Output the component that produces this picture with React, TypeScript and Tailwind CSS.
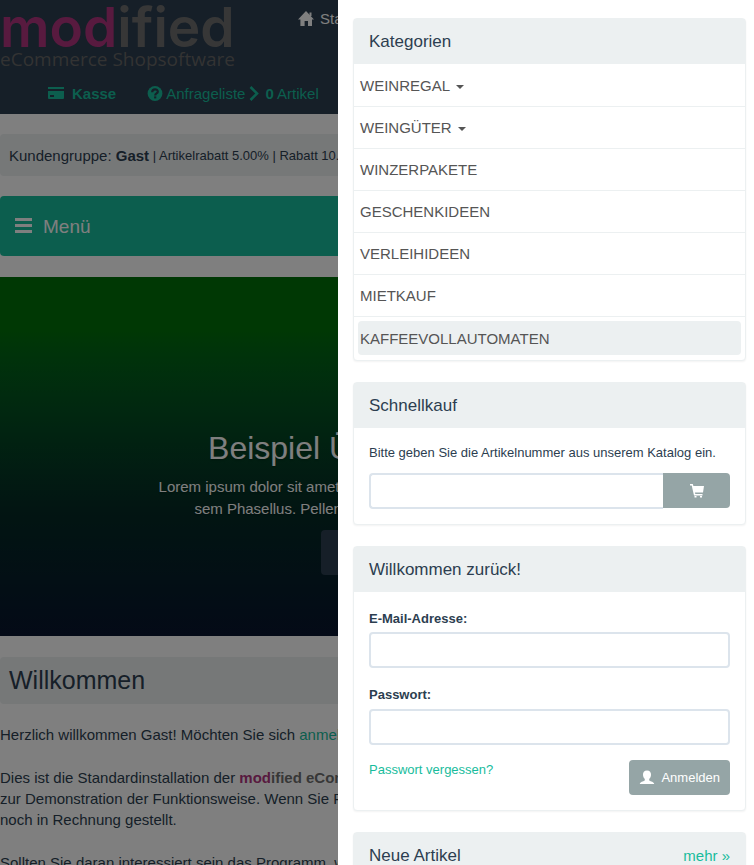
import React from "react";

const categories = [
  { name: "WEINREGAL", sub: true },
  { name: "WEINGÜTER", sub: true },
  { name: "WINZERPAKETE" },
  { name: "GESCHENKIDEEN" },
  { name: "VERLEIHIDEEN" },
  { name: "MIETKAUF" },
  { name: "KAFFEEVOLLAUTOMATEN", active: true },
];

function HomeIcon() {
  return (
    <svg className="h-4 w-4" viewBox="0 0 16 16" fill="currentColor" aria-hidden="true">
      <path d="M8 0 16 8.4H14V15H10V10H6.6V15H2.4V8.4H0Z" />
      <path d="M11.5 1.5H13.5V5H11.5Z" />
    </svg>
  );
}

function CardIcon() {
  return (
    <svg className="h-4 w-4" viewBox="0 0 16 16" fill="currentColor" aria-hidden="true">
      <path d="M0 1H16V3H0ZM0 5H16V12Q16 13 15 13H1Q0 13 0 12ZM2 9V11H6V9Z" fillRule="evenodd" />
    </svg>
  );
}

function QuestionIcon() {
  return (
    <svg className="h-4 w-4" viewBox="0 0 16 16" aria-hidden="true">
      <circle cx="8" cy="7.5" r="7.4" fill="currentColor" />
      <path d="M5.2 6.2C5.2 2.6 10.8 2.6 10.8 5.7C10.8 7.6 8.2 7.3 8.2 9.4" fill="none" stroke="#2c3e50" strokeWidth="2.2" />
      <path d="M7.1 10.4H9.3V12.4H7.1Z" fill="#2c3e50" />
    </svg>
  );
}

function ChevronIcon() {
  return (
    <svg className="h-4 w-3.5" viewBox="2 0 14 16" fill="none" stroke="currentColor" strokeWidth="2.6" aria-hidden="true">
      <path d="M4.5 1 11 7.5 4.5 14" />
    </svg>
  );
}

function CartIcon() {
  return (
    <svg className="h-4 w-4" viewBox="0 0 16 16" fill="currentColor" aria-hidden="true">
      <path d="M1 1H3.8L4.4 3H15L14 9.6H5.9L6.3 11H13.5V12.4H5L2.7 2.4H1Z" />
      <path d="M5.5 13H7.5V14.5H5.5ZM11 13H13V14.5H11Z" />
    </svg>
  );
}

function UserIcon() {
  return (
    <svg className="h-4 w-4" viewBox="0 0 16 16" fill="currentColor" aria-hidden="true">
      <path d="M8 0.5C10.8 0.5 12.2 2.4 12 5C11.9 7 11 8.2 10.2 9V10.4C11.8 11.4 15 11.8 15.2 14H0.8C1 11.8 4.2 11.4 5.8 10.4V9C5 8.2 4.1 7 4 5C3.8 2.4 5.2 0.5 8 0.5Z" />
    </svg>
  );
}

function Panel({ title, more, children }: { title: string; more?: boolean; children?: React.ReactNode }) {
  return (
    <section className="rounded border border-[#ecf0f1] bg-white shadow-xs">
      <header className="flex h-[45px] items-center justify-between bg-[#ecf0f1] px-[15px]">
        <h2 className="text-[17px] leading-6">{title}</h2>
        {more && (
          <a href="#neu" className="text-[15px] leading-5 text-[#18bc9c]">
            mehr »
          </a>
        )}
      </header>
      {children}
    </section>
  );
}

const inputStyle = "h-9 w-full rounded border-2 border-[#dce4ec] bg-white px-3 text-[15px] outline-none";

function Drawer() {
  return (
    <aside className="fixed inset-y-0 right-0 flex w-[416px] flex-col gap-[21px] overflow-hidden bg-white pt-[18px] pr-2 pl-[15px]">
      <Panel title="Kategorien">
        <ul className="divide-y divide-[#ecf0f1] py-px text-[15px] leading-[21px] text-[#555555]">
          {categories.map((c) => (
            <li key={c.name} className="p-1">
              <a
                href="#kategorie"
                className={
                  c.active
                    ? "flex h-[34px] items-center rounded bg-[#ecf0f1] px-0.5"
                    : "flex h-[33px] items-center gap-1.5 px-0.5"
                }
              >
                {c.name}
                {c.sub && (
                  <svg className="mt-0.5 h-1 w-2" viewBox="0 0 8 4" fill="currentColor" aria-hidden="true">
                    <path d="M0 0H8L4 4Z" />
                  </svg>
                )}
              </a>
            </li>
          ))}
        </ul>
      </Panel>

      <Panel title="Schnellkauf">
        <form className="p-[15px]">
          <label htmlFor="sku" className="block pb-[11px] text-[13px] leading-[19px]">
            Bitte geben Sie die Artikelnummer aus unserem Katalog ein.
          </label>
          <div className="flex">
            <input id="sku" type="text" className="h-9 min-w-0 flex-1 rounded-l border-2 border-r-0 border-[#dce4ec] px-3 text-[15px] outline-none" />
            <button type="button" aria-label="In den Warenkorb" className="flex h-[35px] w-[67px] items-center justify-center rounded-r bg-[#95a5a6] text-white">
              <CartIcon />
            </button>
          </div>
        </form>
      </Panel>

      <Panel title="Willkommen zurück!">
        <form className="px-[15px] pt-[17px] pb-[15px] text-[13px] leading-[19px]">
          <label htmlFor="email" className="block pb-1 font-bold">E-Mail-Adresse:</label>
          <input id="email" type="email" className={inputStyle} />
          <label htmlFor="password" className="block pt-[17px] pb-[5px] font-bold">Passwort:</label>
          <input id="password" type="password" className={inputStyle} />
          <div className="flex items-start justify-between pt-[15px]">
            <a href="#passwort" className="text-[#18bc9c]">Passwort vergessen?</a>
            <button type="button" className="flex h-[35px] items-center gap-1.5 rounded bg-[#95a5a6] px-2.5 text-white">
              <UserIcon />
              Anmelden
            </button>
          </div>
        </form>
      </Panel>

      <Panel title="Neue Artikel" more />
    </aside>
  );
}

export default function App() {
  return (
    <div className="h-screen overflow-hidden bg-white font-['Liberation_Sans',Arial,sans-serif] text-[15px] leading-[21px] text-[#2c3e50]">
      <header className="flex h-[114px] flex-col justify-between bg-[#2c3e50] pb-2.5">
        <div className="flex items-start">
          <div className="w-[298px] text-[#6f6f6f]">
            <div className="font-[Inter,sans-serif] text-[55px] leading-[54px] font-semibold">
              <span className="text-[#b0347e]">mod</span>ified
            </div>
            <div className="font-['Open_Sans',sans-serif] text-[19px] leading-[10px] text-[#666666]">eCommerce Shopsoftware</div>
          </div>
          <a href="#start" className="flex items-center gap-1.5 pt-2 text-white">
            <HomeIcon />
            Startseite
          </a>
        </div>
        <nav className="flex items-center gap-[31px] pl-12 text-[#18bc9c]">
          <a href="#kasse" className="flex items-center gap-2 font-bold">
            <CardIcon />
            Kasse
          </a>
          <a href="#liste" className="flex items-center gap-[3px]">
            <QuestionIcon />
            Anfrageliste
            <ChevronIcon />
            <span><b>0</b> Artikel</span>
          </a>
        </nav>
      </header>

      <div className="mt-5 flex h-[42px] items-center rounded bg-[#ecf0f1] px-[9px] whitespace-pre">
        Kundengruppe: <b>Gast</b>
        <span className="text-[13px]"> | Artikelrabatt 5.00% | Rabatt 10.00%</span>
      </div>

      <button type="button" className="mt-5 flex h-[60px] w-full items-center gap-2.5 rounded bg-[#18bc9c] px-[15px] text-[19px] text-white">
        <svg className="h-[18px] w-[18px]" viewBox="0 0 18 18" fill="currentColor" aria-hidden="true">
          <path d="M0 1H17V4H0ZM0 7H17V10H0ZM0 13H17V16H0Z" />
        </svg>
        Menü
      </button>

      <section className="mt-[21px] flex h-[359px] flex-col items-center bg-linear-to-b from-[#007008] from-15% via-[#042a24] via-65% to-[#08142e] pt-[152px] text-center text-white">
        <h1 className="text-[32px] leading-[38px] text-shadow-sm">Beispiel Überschrift neu</h1>
        <p className="pt-[9px] leading-[22px] text-shadow-sm">
          Lorem ipsum dolor sit amet, consectetur adipiscing elit lacus nunc
          <br />
          sem Phasellus. Pellentesque habitant morbi tristique a.
        </p>
        <button type="button" className="mt-2.5 h-[45px] w-28 rounded bg-[#2c3e50]">Details</button>
      </section>

      <main>
        <h2 className="mt-[21px] flex h-[47px] items-center rounded bg-[#ecf0f1] px-[9px] text-[25px]">Willkommen</h2>
        <div className="flex flex-col gap-[22px] pt-5 leading-[21px] whitespace-nowrap">
          <p>
            Herzlich willkommen Gast! Möchten Sie sich <a href="#login" className="text-[#18bc9c]">anmelden</a>?
          </p>
          <p>
            Dies ist die Standardinstallation der <b className="text-[#b0347e]">mod</b>
            <b className="text-[#6f6f6f]">ified eCommerce Shopsoftware</b>.
            <br />
            zur Demonstration der Funktionsweise. Wenn Sie Produkte bestellen,
            <br />
            noch in Rechnung gestellt.
          </p>
          <p>Sollten Sie daran interessiert sein das Programm, welches die Grundlage bildet</p>
        </div>
      </main>

      <div className="fixed inset-0 bg-black/50" />
      <Drawer />
    </div>
  );
}
